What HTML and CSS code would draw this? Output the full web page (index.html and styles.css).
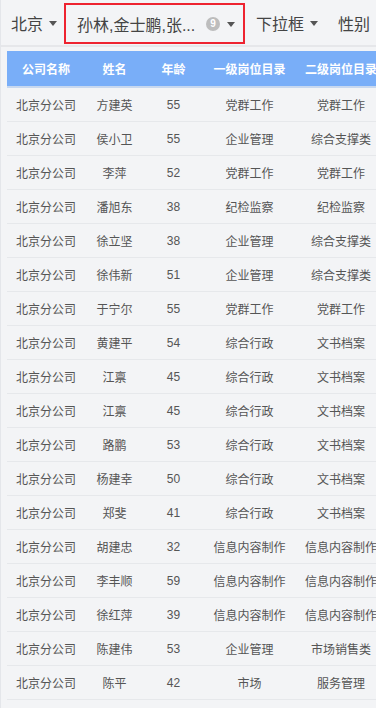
FILE: index.html
```html
<!DOCTYPE html>
<html lang="zh">
<head>
<meta charset="utf-8">
<link rel="stylesheet" href="styles.css">
</head>
<body>
<div class="page">
  <div class="toolbar">
    <div class="filter f-city">北京<span class="caret"></span></div>
    <div class="filter f-names">
      <span class="names-text">孙林,金士鹏,张...</span>
      <span class="badge">9</span>
      <span class="caret"></span>
    </div>
    <div class="filter f-drop">下拉框<span class="caret"></span></div>
    <div class="filter f-sex">性别</div>
  </div>
  <div class="divider"></div>
  <div class="table-wrap">
    <div class="row head">
      <div class="c c1">公司名称</div><div class="c c2">姓名</div><div class="c c3">年龄</div><div class="c c4">一级岗位目录</div><div class="c c5">二级岗位目录</div>
    </div>
    <div class="row"><div class="c c1">北京分公司</div><div class="c c2">方建英</div><div class="c c3">55</div><div class="c c4">党群工作</div><div class="c c5">党群工作</div></div>
    <div class="row"><div class="c c1">北京分公司</div><div class="c c2">侯小卫</div><div class="c c3">55</div><div class="c c4">企业管理</div><div class="c c5">综合支撑类</div></div>
    <div class="row"><div class="c c1">北京分公司</div><div class="c c2">李萍</div><div class="c c3">52</div><div class="c c4">党群工作</div><div class="c c5">党群工作</div></div>
    <div class="row"><div class="c c1">北京分公司</div><div class="c c2">潘旭东</div><div class="c c3">38</div><div class="c c4">纪检监察</div><div class="c c5">纪检监察</div></div>
    <div class="row"><div class="c c1">北京分公司</div><div class="c c2">徐立坚</div><div class="c c3">38</div><div class="c c4">企业管理</div><div class="c c5">综合支撑类</div></div>
    <div class="row"><div class="c c1">北京分公司</div><div class="c c2">徐伟新</div><div class="c c3">51</div><div class="c c4">企业管理</div><div class="c c5">综合支撑类</div></div>
    <div class="row"><div class="c c1">北京分公司</div><div class="c c2">于宁尔</div><div class="c c3">55</div><div class="c c4">党群工作</div><div class="c c5">党群工作</div></div>
    <div class="row"><div class="c c1">北京分公司</div><div class="c c2">黄建平</div><div class="c c3">54</div><div class="c c4">综合行政</div><div class="c c5">文书档案</div></div>
    <div class="row"><div class="c c1">北京分公司</div><div class="c c2">江禀</div><div class="c c3">45</div><div class="c c4">综合行政</div><div class="c c5">文书档案</div></div>
    <div class="row"><div class="c c1">北京分公司</div><div class="c c2">江禀</div><div class="c c3">45</div><div class="c c4">综合行政</div><div class="c c5">文书档案</div></div>
    <div class="row"><div class="c c1">北京分公司</div><div class="c c2">路鹏</div><div class="c c3">53</div><div class="c c4">综合行政</div><div class="c c5">文书档案</div></div>
    <div class="row"><div class="c c1">北京分公司</div><div class="c c2">杨建幸</div><div class="c c3">50</div><div class="c c4">综合行政</div><div class="c c5">文书档案</div></div>
    <div class="row"><div class="c c1">北京分公司</div><div class="c c2">郑斐</div><div class="c c3">41</div><div class="c c4">综合行政</div><div class="c c5">文书档案</div></div>
    <div class="row"><div class="c c1">北京分公司</div><div class="c c2">胡建忠</div><div class="c c3">32</div><div class="c c4">信息内容制作</div><div class="c c5">信息内容制作</div></div>
    <div class="row"><div class="c c1">北京分公司</div><div class="c c2">李丰顺</div><div class="c c3">59</div><div class="c c4">信息内容制作</div><div class="c c5">信息内容制作</div></div>
    <div class="row"><div class="c c1">北京分公司</div><div class="c c2">徐红萍</div><div class="c c3">39</div><div class="c c4">信息内容制作</div><div class="c c5">信息内容制作</div></div>
    <div class="row"><div class="c c1">北京分公司</div><div class="c c2">陈建伟</div><div class="c c3">53</div><div class="c c4">企业管理</div><div class="c c5">市场销售类</div></div>
    <div class="row"><div class="c c1">北京分公司</div><div class="c c2">陈平</div><div class="c c3">42</div><div class="c c4">市场</div><div class="c c5">服务管理</div></div>
  </div>
</div>
</body>
</html>
```
FILE: styles.css
```css
html, body {
  margin: 0;
  padding: 0;
  background: #f3f4f6;
  overflow: hidden;
}
.page {
  width: 376px;
  height: 708px;
  overflow: hidden;
  font-family: "Liberation Sans", "Noto Sans CJK SC", sans-serif;
  color: #555;
  border-left: 1px solid #e4e6ea;
  box-sizing: border-box;
}
.toolbar {
  height: 45px;
  display: flex;
  align-items: center;
  white-space: nowrap;
  font-size: 16px;
  color: #444;
}
.filter {
  display: flex;
  align-items: center;
  flex: none;
}
.caret {
  display: inline-block;
  width: 0;
  height: 0;
  border-left: 4px solid transparent;
  border-right: 4px solid transparent;
  border-top: 5px solid #555;
  margin-left: 6px;
  margin-top: 1px;
}
.f-city {
  margin-left: 10px;
  width: 53px;
}
.f-names {
  box-sizing: border-box;
  width: 181px;
  height: 41px;
  margin-top: 3px;
  margin-bottom: 1px;
  border: 2px solid #ee2330;
  padding-left: 11px;
}
.names-text {
  width: 129px;
}
.badge {
  width: 14px;
  height: 14px;
  border-radius: 50%;
  background: #bdbdbd;
  color: #fff;
  font-size: 10px;
  line-height: 14px;
  text-align: center;
  font-weight: bold;
}
.f-names .caret {
  margin-left: 7px;
}
.f-drop {
  margin-left: 11px;
  width: 82px;
}
.divider {
  height: 2px;
  background: #e6e7ea;
}
.table-wrap {
  margin-top: 4px;
  margin-left: 6px;
  width: 390px;
}
.row {
  display: flex;
  height: 34px;
  align-items: stretch;
  border-bottom: 1px solid #e6e8eb;
  box-sizing: border-box;
  font-size: 12px;
}
.row.head {
  height: 37px;
  background: #79aef8;
  color: #fff;
  font-weight: bold;
  font-size: 12px;
  border-bottom: 2px solid #c8d8ef;
}
.c {
  display: flex;
  align-items: center;
  justify-content: center;
  flex: none;
  white-space: nowrap;
  box-sizing: border-box;
}
.c1 { width: 78px; }
.c2 { width: 59px; }
.c3 { width: 59px; }
.c4 { width: 93px; }
.c5 { width: 90px; }
```
